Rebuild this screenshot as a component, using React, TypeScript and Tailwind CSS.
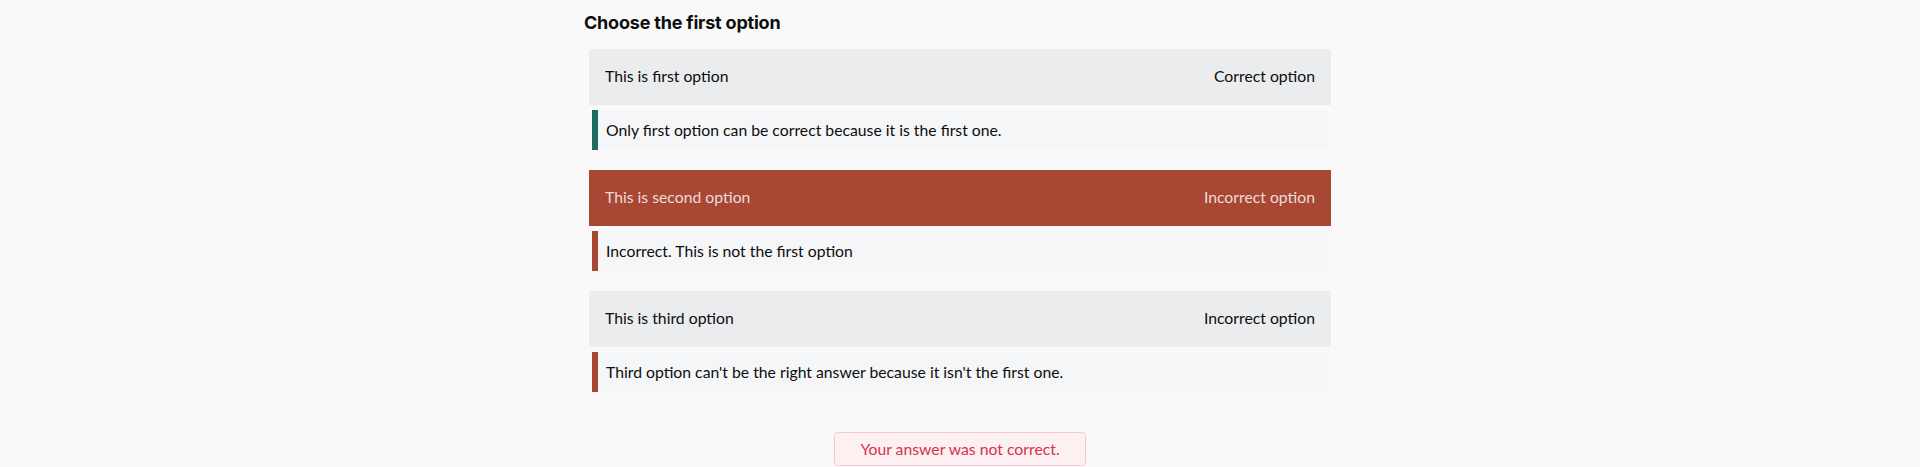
import React from "react";

const OPTIONS = [
  {
    text: "This is first option",
    status: "Correct option",
    feedback: "Only first option can be correct because it is the first one.",
    correct: true,
    selected: false,
  },
  {
    text: "This is second option",
    status: "Incorrect option",
    feedback: "Incorrect. This is not the first option",
    correct: false,
    selected: true,
  },
  {
    text: "This is third option",
    status: "Incorrect option",
    feedback: "Third option can't be the right answer because it isn't the first one.",
    correct: false,
    selected: false,
  },
];

const App: React.FC = () => {
  return (
    <div
      className="min-h-[467px] w-full bg-[#f9f9f9] text-[#0d0d0d]"
      style={{ fontFamily: "Lato, 'Open Sans', sans-serif" }}
    >
      <div className="mx-auto w-[752px] pt-[9px]">
        <h1
          className="text-[18px] font-bold leading-[27px] tracking-[-0.2px] text-[#0d0d0d]"
          style={{ fontFamily: "Inter, 'Open Sans', sans-serif" }}
        >
          Choose the first option
        </h1>
        <div className="mt-[13px] space-y-[20px] px-[5px]">
          {OPTIONS.map((opt, idx) => (
            <div key={idx}>
              <div
                className={`flex h-[56px] items-center justify-between px-[16px] pb-[2px] text-[15.75px] ${
                  opt.selected
                    ? "bg-[#a84834] text-[#ecdcd8]"
                    : "bg-[#ebecee] text-[#0d0d0d]"
                }`}
              >
                <span>{opt.text}</span>
                <span>{opt.status}</span>
              </div>
              <div
                className={`mx-[3px] mt-[5px] flex h-[40px] items-center border-l-[6px] bg-[#f5f6f8] pl-[8px] text-[15.75px] ${
                  opt.correct ? "border-[#1e6b62]" : "border-[#a84834]"
                }`}
              >
                {opt.feedback}
              </div>
            </div>
          ))}
        </div>
        <div className="mt-[40px] flex justify-center">
          <div className="flex h-[34px] w-[252px] items-center justify-center rounded-[4px] border border-[#f6c9cf] bg-[#fdf0f2] text-[15.75px] text-[#d6324a]">
            Your answer was not correct.
          </div>
        </div>
      </div>
    </div>
  );
};

export default App;
